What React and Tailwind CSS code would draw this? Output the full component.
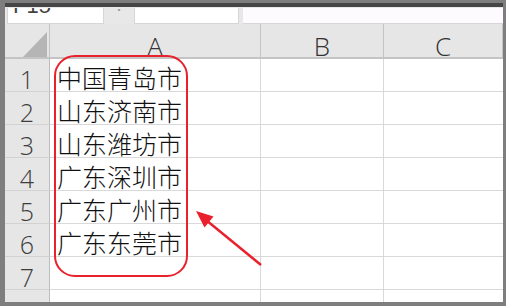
import React from "react";

const cities = ["中国青岛市", "山东济南市", "山东潍坊市", "广东深圳市", "广东广州市", "广东东莞市", "", ""];
const cols = ["A", "B", "C"];

const App = () => {
  return (
    <div className="relative w-[506px] h-[306px] overflow-hidden bg-[#7e7e7e] pt-[3px] pl-[5px] pr-[3px] pb-[4px] font-['Liberation_Sans',sans-serif]">
      <div className="flex flex-col h-full border-t-[4px] border-[#464646] bg-[#e8e8e8] overflow-hidden">
        {/* formula bar */}
        <div className="flex items-start h-[17px] pt-[1px]">
          <div className="ml-[2px] w-[97px] h-[16px] bg-white border border-[#d6d6d6] border-t-0 overflow-hidden">
            <div className="-mt-[13px] pl-[5px] text-[22px] leading-[22px] text-[#444]">F15</div>
          </div>
          <div className="w-[30px] h-[16px] overflow-hidden flex justify-center">
            <div className="-mt-[14px] text-[18px] leading-[18px] text-[#9a9a9a]">⋮</div>
          </div>
          <div className="w-[105px] h-[16px] bg-white border border-[#d6d6d6] border-t-0 overflow-hidden flex gap-[22px] pl-[10px]">
            <span className="-mt-[13px] text-[16px] leading-[16px] text-[#aaa]">✕</span>
            <span className="-mt-[13px] text-[16px] leading-[16px] text-[#aaa]">✓</span>
            <span className="-mt-[13px] text-[16px] leading-[16px] text-[#999] italic">fx</span>
          </div>
          <div className="ml-[4px] flex-1 h-[16px] bg-[#fdfbfd] border-b border-[#d6d6d6]" />
        </div>
        <div className="h-[6px]" />
        {/* sheet grid */}
        <div className="grid grid-cols-[45px_211px_123px_119px] grid-rows-[35px_repeat(8,33px)]">
          <div className="relative bg-[#e6e6e6] border-r border-b-2 border-[#c4c4c4]">
            <svg className="absolute left-[18px] top-[8px]" width="25" height="26" viewBox="0 0 25 26">
              <polygon points="0,25 24,25 24,0" fill="#b5b5b5" />
            </svg>
          </div>
          {cols.map((c) => (
            <div
              key={c}
              className="flex items-start justify-center pt-[9px] bg-[#e6e6e6] border-r border-b-2 border-[#c4c4c4] text-[26px] leading-[26px] text-[#333] font-['Open_Sans',sans-serif] font-light"
            >
              {c}
            </div>
          ))}
          {cities.map((city, i) => (
            <React.Fragment key={i}>
              <div className="flex items-start justify-center pt-[8px] bg-[#e6e6e6] border-r border-b border-r-[#bdbdbd] border-b-[#d2d2d2] text-[25px] leading-[25px] text-[#3d3d3d] font-['Open_Sans',sans-serif] font-light">
                {i + 1}
              </div>
              <div className="flex items-start pl-[7px] pt-[3px] bg-white border-r border-b border-[#d9d9d9] text-[25px] leading-[30px] text-[#111] font-['Noto_Sans_CJK_SC',sans-serif] font-light whitespace-nowrap">
                {city}
              </div>
              <div className="bg-white border-r border-b border-[#d9d9d9]" />
              <div className="bg-white border-b border-[#d9d9d9]" />
            </React.Fragment>
          ))}
        </div>
      </div>
      {/* annotation overlay */}
      <svg className="absolute left-0 top-0 pointer-events-none" width="506" height="306" viewBox="0 0 506 306">
        <rect x="55" y="56" width="132" height="220" rx="20" ry="20" fill="none" stroke="#e8212c" strokeWidth="2" />
        <line x1="261" y1="265" x2="206" y2="220" stroke="#e8212c" strokeWidth="2.5" />
        <polygon points="196,211 213.5,216.6 204.5,227.4" fill="#e8212c" />
      </svg>
    </div>
  );
};

export default App;
